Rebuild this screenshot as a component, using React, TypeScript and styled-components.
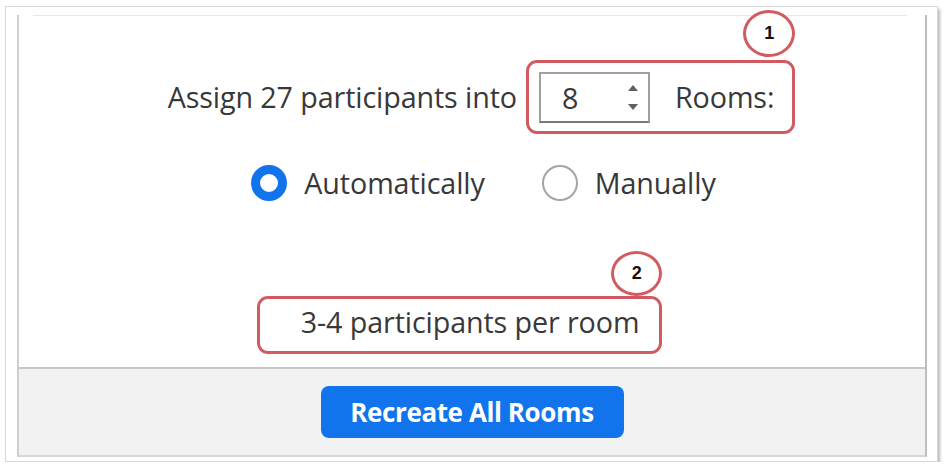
import React from "react";
import styled, { createGlobalStyle } from "styled-components";

const Global = createGlobalStyle`
  html, body { margin: 0; padding: 0; background: #ffffff; }
  body { font-family: "Open Sans", "Noto Sans", sans-serif; }
`;

const Frame = styled.div`
  box-sizing: border-box;
  margin: 6px 0 0 5px;
  width: 933px;
  height: 456px;
  border: 1px solid #d9d9d9;
  box-shadow: 2px 3px 3px rgba(0, 0, 0, 0.28);
  background: #fff;
  padding: 8px 10px 4px 11px;
  display: flex;
`;

const Panel = styled.div`
  box-sizing: border-box;
  flex: 1;
  display: flex;
  flex-direction: column;
  border-left: 2px solid #cfcfcf;
  border-right: 2px solid #bdbdbd;
  border-bottom: 2px solid #d6d6d6;
`;

const Content = styled.div`
  position: relative;
  height: 352px;
  box-sizing: border-box;
  display: flex;
  flex-direction: column;
  align-items: center;
  padding-top: 45px;
  &::before {
    content: "";
    position: absolute;
    top: 0;
    left: 14px;
    right: 18px;
    height: 1px;
    background: #fcdfe2;
  }
`;

const Row = styled.div<{ $shift?: number; $top?: number }>`
  display: flex;
  align-items: center;
  margin-left: ${(p) => p.$shift ?? 0}px;
  margin-top: ${(p) => p.$top ?? 0}px;
`;

const Label = styled.span<{ $gap?: number }>`
  font-size: 28.7px;
  line-height: 34px;
  color: #383838;
  letter-spacing: -0.1px;
  margin-right: ${(p) => p.$gap ?? 0}px;
`;

const Highlight = styled.div<{ $pl: number; $pr: number; $h: number; $pb?: number }>`
  position: relative;
  box-sizing: border-box;
  height: ${(p) => p.$h}px;
  display: flex;
  align-items: center;
  border: 3px solid #d15b60;
  border-radius: 11px;
  padding: 0 ${(p) => p.$pr}px ${(p) => p.$pb ?? 0}px ${(p) => p.$pl}px;
`;

const Badge = styled.div<{ $right: number; $top: number; $w: number; $h: number }>`
  position: absolute;
  right: ${(p) => p.$right}px;
  top: ${(p) => p.$top}px;
  width: ${(p) => p.$w}px;
  height: ${(p) => p.$h}px;
  box-sizing: border-box;
  border: 3px solid #d15b60;
  border-radius: 50%;
  background: #fff;
  display: flex;
  align-items: center;
  justify-content: center;
  font-family: "Liberation Sans", Arial, sans-serif;
  font-weight: bold;
  font-size: 18px;
  color: #111;
`;

const Spinner = styled.div`
  box-sizing: border-box;
  width: 111px;
  height: 51px;
  border: 2px solid #a0a0a0;
  border-bottom-color: #7a7a7a;
  display: flex;
  align-items: center;
  justify-content: space-between;
  padding: 0 10px 0 21px;
  margin-right: 25px;
`;

const SpinValue = styled.span`
  font-size: 28.7px;
  color: #383838;
`;

const Arrows = styled.div`
  display: flex;
  flex-direction: column;
  gap: 13px;
`;

const Arrow = styled.div<{ $down?: boolean }>`
  width: 0;
  height: 0;
  border-left: 5px solid transparent;
  border-right: 5px solid transparent;
  ${(p) =>
    p.$down
      ? "border-top: 6px solid #606060;"
      : "border-bottom: 6px solid #606060;"}
`;

const RadioRow = styled.div`
  display: flex;
  align-items: center;
  margin-top: 31px;
  margin-left: 23px;
  gap: 57px;
`;

const RadioOption = styled.label`
  display: flex;
  align-items: center;
  gap: 17px;
`;

const RadioDot = styled.span<{ $checked?: boolean }>`
  box-sizing: border-box;
  width: 36px;
  height: 36px;
  border-radius: 50%;
  background: #fff;
  border: ${(p) => (p.$checked ? "9px solid #1174ec" : "2px solid #a4a4a4")};
`;

const Footer = styled.div`
  flex: 1;
  background: #f2f2f2;
  border-top: 2px solid #c8c8c8;
  display: flex;
  align-items: center;
  justify-content: center;
`;

const Button = styled.button`
  box-sizing: border-box;
  width: 303px;
  height: 52px;
  border: none;
  border-radius: 8px;
  background: #1174ec;
  color: #fff;
  font-family: "Open Sans", "Noto Sans", sans-serif;
  font-weight: 700;
  font-size: 26px;
  letter-spacing: -0.4px;
  cursor: pointer;
`;

export default function App() {
  return (
    <>
      <Global />
      <Frame>
        <Panel>
          <Content>
            <Row $shift={19}>
              <Label $gap={9}>Assign 27 participants into</Label>
              <Highlight $pl={10} $pr={18} $h={74}>
                <Badge $right={-3} $top={-53} $w={52} $h={47}>
                  1
                </Badge>
                <Spinner>
                  <SpinValue>8</SpinValue>
                  <Arrows>
                    <Arrow />
                    <Arrow $down />
                  </Arrows>
                </Spinner>
                <Label>Rooms:</Label>
              </Highlight>
            </Row>
            <RadioRow>
              <RadioOption>
                <RadioDot $checked />
                <Label>Automatically</Label>
              </RadioOption>
              <RadioOption>
                <RadioDot />
                <Label>Manually</Label>
              </RadioOption>
            </RadioRow>
            <Row $shift={-25} $top={95}>
              <Highlight $pl={41} $pr={20} $h={58} $pb={6}>
                <Badge $right={-3} $top={-48} $w={51} $h={45}>
                  2
                </Badge>
                <Label>3-4 participants per room</Label>
              </Highlight>
            </Row>
          </Content>
          <Footer>
            <Button>Recreate All Rooms</Button>
          </Footer>
        </Panel>
      </Frame>
    </>
  );
}
